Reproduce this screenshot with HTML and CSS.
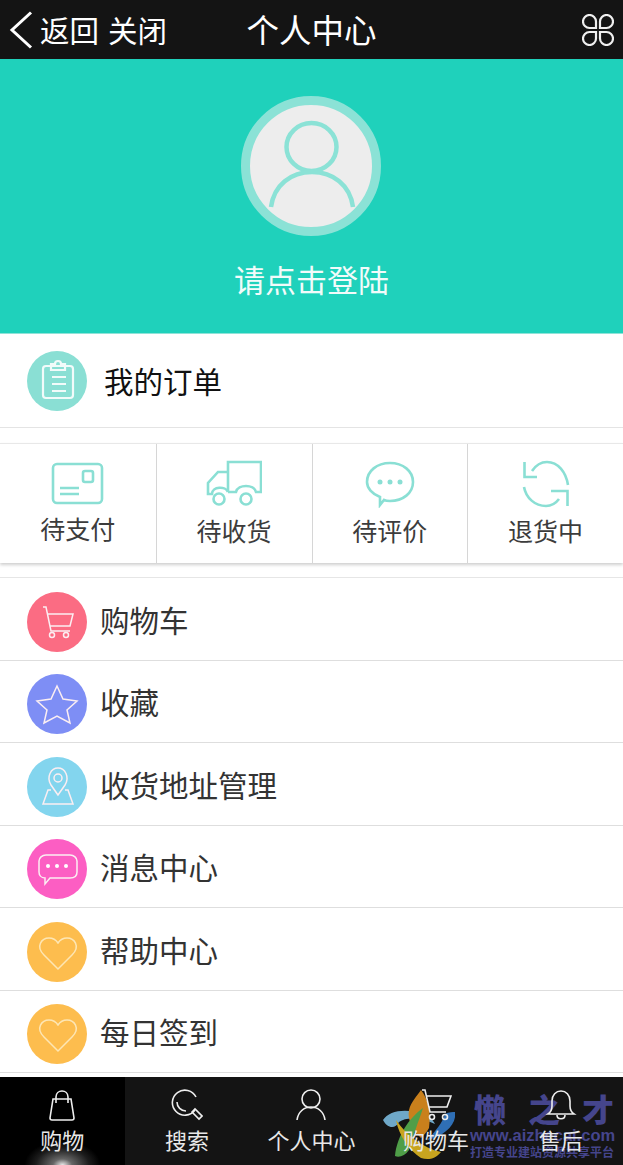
FILE: index.html
```html
<!DOCTYPE html>
<html>
<head>
    <meta charset="utf-8">
    <title>个人中心</title>
    <link rel="stylesheet" href="styles.css">
</head>
<body>
    <div class="topbar">
        <div class="topbar-left">
            <svg class="back-icon" viewBox="0 0 24 38"><path d="M22 1.500 3 19l19 17.500"/></svg>
            <span>返回</span>
            <span class="close-link">关闭</span>
        </div>
        <h1 class="topbar-title">个人中心</h1>
        <svg class="menu-icon" viewBox="0 0 32 32">
            <path d="M14 14H7.500A6.500 6.500 0 1 1 14 7.500z"/>
            <path d="M18 14h6.500A6.500 6.500 0 1 0 18 7.500z"/>
            <path d="M14 18H7.500A6.500 6.500 0 1 0 14 24.500z"/>
            <path d="M18 18h6.500A6.500 6.500 0 1 1 18 24.500z"/>
        </svg>
    </div>

    <div class="profile">
        <div class="avatar">
            <svg viewBox="0 0 122 122">
                <ellipse cx="61.500" cy="42" rx="25" ry="24"/>
                <path d="M21 102c3-22 20-35 41-35s38 13 41 35"/>
            </svg>
        </div>
        <div class="login-link">请点击登陆</div>
    </div>

    <div class="order-row">
        <span class="circle circle-teal">
            <svg viewBox="0 0 60 60">
                <rect x="16" y="15" width="30" height="32" rx="3"/>
                <path d="M24 15v-2h4a3 3 0 0 1 6 0h4v6H24zM25 26h14M25 33h14M25 40h14"/>
            </svg>
        </span>
        <span class="order-text">我的订单</span>
    </div>

    <div class="tabs">
        <div class="tab-item tab-first">
            <svg viewBox="0 0 56 48">
                <rect x="3" y="4" width="49" height="39" rx="4"/>
                <rect x="33" y="11" width="10" height="11" rx="2"/>
                <path d="M10 28h19M10 34h19"/>
            </svg>
            <span>待支付</span>
        </div>
        <div class="tab-item">
            <svg viewBox="0 0 56 48">
                <path d="M22 32V2h33v30h-5c-2-8-18-8-20 0h-8"/>
                <path d="M22 12H12L2 23v11h4c0-8 14-8 16-2"/>
                <circle cx="13" cy="39" r="5.500"/>
                <circle cx="40" cy="39" r="5.500"/>
            </svg>
            <span>待收货</span>
        </div>
        <div class="tab-item">
            <svg viewBox="0 0 56 48">
                <path d="M18 37C10 34 5 28 5 22 5 11 15 3 28 3s23 8 23 19-10 19-23 19c-2 0-4 0-6-1l-4 5z"/>
                <circle class="dot" cx="18" cy="22" r="2.500"/>
                <circle class="dot" cx="28" cy="22" r="2.500"/>
                <circle class="dot" cx="38" cy="22" r="2.500"/>
            </svg>
            <span>待评价</span>
        </div>
        <div class="tab-item">
            <svg viewBox="0 0 56 48">
                <path d="M6.500 2v15H19"/>
                <path d="M14 11C18 5 24 2 29 2c11 0 19 10 21 23"/>
                <path d="M49.500 46V31H33"/>
                <path d="M6 27c2 11 11 19 22 19 5 0 10-3 13-7"/>
            </svg>
            <span>退货中</span>
        </div>
    </div>

    <ul class="menu-list">
        <li class="menu-row">
            <span class="circle circle-pink">
                <svg viewBox="0 0 60 60">
                    <path d="M16 15h3l5 24h19M21 22h25l-3 12H23"/>
                    <circle cx="25" cy="43" r="2.500"/>
                    <circle cx="39" cy="43" r="2.500"/>
                </svg>
            </span>
            <span class="menu-label">购物车</span>
        </li>
        <li class="menu-row">
            <span class="circle circle-blue">
                <svg viewBox="0 0 60 60">
                    <path d="m30 12 6 13 14 2-10 9 3 13-13-7-13 7 3-13-10-9 14-2z"/>
                </svg>
            </span>
            <span class="menu-label">收藏</span>
        </li>
        <li class="menu-row">
            <span class="circle circle-sky">
                <svg viewBox="0 0 60 60">
                    <path d="M31 38 24 28c-5-8 0-17 7-17s12 9 7 17z"/>
                    <circle cx="31" cy="21" r="4"/>
                    <path d="M24 33h-3l-5 14h30l-5-14h-3"/>
                </svg>
            </span>
            <span class="menu-label">收货地址管理</span>
        </li>
        <li class="menu-row">
            <span class="circle circle-magenta">
                <svg viewBox="0 0 60 60">
                    <path d="M19 16h24c4 0 7 3 7 6v11c0 4-3 6-7 6H23l-5 6v-6c-4 0-6-3-6-6V22c0-3 3-6 7-6z"/>
                    <circle class="dot" cx="21" cy="27" r="2"/>
                    <circle class="dot" cx="30" cy="27" r="2"/>
                    <circle class="dot" cx="39" cy="27" r="2"/>
                </svg>
            </span>
            <span class="menu-label">消息中心</span>
        </li>
        <li class="menu-row">
            <span class="circle circle-amber">
                <svg viewBox="0 0 60 60">
                    <path d="M31 47 17 33c-9-9-2-17 5-17 4 0 7 2 9 5 2-3 5-5 9-5 7 0 14 8 5 17z"/>
                </svg>
            </span>
            <span class="menu-label">帮助中心</span>
        </li>
        <li class="menu-row">
            <span class="circle circle-amber">
                <svg viewBox="0 0 60 60">
                    <path d="M31 47 17 33c-9-9-2-17 5-17 4 0 7 2 9 5 2-3 5-5 9-5 7 0 14 8 5 17z"/>
                </svg>
            </span>
            <span class="menu-label">每日签到</span>
        </li>
    </ul>

    <div class="footer">
        <div class="foot-item foot-active">
            <svg viewBox="0 0 32 32">
                <path d="M7 10h18l3 19c0 1-1 2-2 2H6c-1 0-2-1-2-2z"/>
                <path d="M10 14V8c0-8 12-8 12 0v6"/>
            </svg>
            <span>购物</span>
        </div>
        <div class="foot-item">
            <svg viewBox="0 0 32 32">
                <path d="M24 21A12.500 12.500 0 1 1 25 8"/>
                <path d="M6 13c0 5 4 9 9 9M21 23l3-3 7 7-3 3z"/>
            </svg>
            <span>搜索</span>
        </div>
        <div class="foot-item">
            <svg viewBox="0 0 32 32">
                <ellipse cx="16" cy="10" rx="9" ry="9"/>
                <path d="M2 31c1-8 7-13 14-13s13 5 14 13"/>
            </svg>
            <span>个人中心</span>
        </div>
        <div class="foot-item">
            <svg viewBox="0 0 32 32">
                <path d="M2 1h3l5 22h16M7 7h24l-4 11H9"/>
                <circle cx="12" cy="28" r="2.500"/>
                <circle cx="25" cy="28" r="2.500"/>
            </svg>
            <span>购物车</span>
        </div>
        <div class="foot-item">
            <svg viewBox="0 0 32 32">
                <path d="M3 25c3-2 4-4 4-8v-5C7 6 11 2 16 2s9 4 9 10v5c0 4 1 6 4 8z"/>
                <path d="M12 26c0 5 8 5 8 0"/>
            </svg>
            <span>售后</span>
        </div>

        <!-- 水印 -->
        <div class="watermark">
            <svg class="mark-logo" viewBox="0 0 72 70">
                <path class="mark-sky" d="M0 30c6-10 24-12 40-6 6 2 10 6 12 10-12-6-28-8-36-2-4 8-12 6-16-2z"/>
                <path class="mark-orange" d="M38 0c8 10 10 24 8 38-2 4-6 8-8 10-8-8-14-18-12-28 2-8 8-14 12-20z"/>
                <path class="mark-green" d="M12 66c2-20 14-38 28-48-4 12-10 28-14 42-4 6-10 8-14 6z"/>
                <path class="mark-blue" d="M72 22c2 12-10 24-28 28 8-8 16-18 18-26 4-2 8-2 10-2z"/>
                <path class="mark-yellow" d="M13 30c11 16 27 28 45 32-6 8-14 8-20 6-12-8-22-22-25-38z"/>
            </svg>
            <div class="mark-text">
                <div class="mark-name"><span>懒</span><span>之</span><span>才</span></div>
                <div class="mark-url">www.aizhecai.com</div>
                <div class="mark-slogan">打造专业建站资源共享平台</div>
            </div>
        </div>
    </div>
</body>
</html>
```
FILE: styles.css
```css
* {
    box-sizing: border-box;
}

body {
    margin: 0;
    width: 623px;
    height: 1165px;
    overflow: hidden;
    position: relative;
    background: #fff;
    font-family: "Noto Sans CJK SC", "Liberation Sans", sans-serif;
}

/* 顶部导航 */
.topbar {
    height: 59px;
    background: #141414;
    color: #fff;
    display: grid;
    grid-template-columns: 1fr auto 1fr;
    align-items: center;
    padding: 0 9px;
}

.topbar-left {
    display: flex;
    align-items: center;
    font-size: 29.500px;
    line-height: 59px;
}

.back-icon {
    width: 24px;
    height: 38px;
    margin-right: 7px;
    fill: none;
    stroke: #fff;
    stroke-width: 3;
}

.close-link {
    margin-left: 9px;
}

.topbar-title {
    margin: 0;
    padding-bottom: 2px;
    font-size: 32.500px;
    font-weight: 400;
    line-height: 57px;
    white-space: nowrap;
}

.menu-icon {
    justify-self: end;
    width: 32px;
    height: 32px;
    fill: none;
    stroke: #f0f0f0;
    stroke-width: 2.200;
}

/* 头像区域 */
.profile {
    height: 275px;
    background: #1fd1bb;
    border-bottom: 1px solid #8fe3d8;
    display: flex;
    flex-direction: column;
    align-items: center;
    padding-top: 37px;
}

.avatar {
    width: 140px;
    height: 140px;
    margin-right: 1px;
    border-radius: 50%;
    border: 9px solid #8be2d6;
    background: #ededed;
}

.avatar svg {
    display: block;
    width: 122px;
    height: 122px;
    fill: none;
    stroke: #8be2d6;
    stroke-width: 4.500;
}

.login-link {
    margin-top: 19px;
    color: #f2fbfa;
    font-size: 31px;
    line-height: 48px;
}

/* 我的订单 */
.order-row {
    height: 94px;
    display: flex;
    align-items: center;
    padding-left: 27px;
    gap: 17px;
    font-size: 29.500px;
    color: #111;
    border-bottom: 1px solid #e4e4e4;
}

.order-text {
    margin-bottom: 2px;
}

.circle {
    width: 60px;
    height: 60px;
    border-radius: 50%;
    flex: none;
    display: block;
}

.circle svg {
    display: block;
    width: 60px;
    height: 60px;
    fill: none;
    stroke: #fbeef2;
    stroke-width: 1.500;
}

.circle .dot {
    fill: #fff;
    stroke: none;
}

.circle-teal { background: #8adfd4; }
.circle-pink { background: #fb6c83; }
.circle-blue { background: #7e8ef5; }
.circle-sky { background: #83d5ee; }
.circle-magenta { background: #fc5ec3; }
.circle-amber { background: #fdbd4e; }

.circle-teal svg {
    stroke: #f2fbfa;
    stroke-width: 2.200;
}

.circle-amber svg {
    stroke: #fde6b4;
}

/* 订单状态 */
.tabs {
    margin-top: 15px;
    height: 120px;
    display: grid;
    grid-template-columns: repeat(4, 1fr);
    background: #fff;
    border-top: 1px solid #e8e8e8;
    box-shadow: 0 2px 3px #d0d0d0;
}

.tab-item {
    display: flex;
    flex-direction: column;
    align-items: center;
    padding-top: 16px;
    gap: 4px;
    border-left: 1px solid #d6d6d6;
    font-size: 25px;
    line-height: 37px;
    color: #3c3c3c;
}

.tab-first {
    border-left: 0;
    gap: 2px;
}

.tab-item svg {
    display: block;
    width: 56px;
    height: 48px;
    fill: none;
    stroke: #8adfd4;
    stroke-width: 2.600;
}

.tab-item .dot {
    fill: #8adfd4;
    stroke: none;
}

/* 菜单列表 */
.menu-list {
    list-style: none;
    margin: 14px 0 0;
    padding: 0;
    border-top: 1px solid #e6e6e6;
}

.menu-row {
    height: 82.500px;
    display: flex;
    align-items: center;
    padding: 14px 0 8px 27px;
    gap: 13px;
    font-size: 29.500px;
    color: #333;
    border-bottom: 1px solid #dedede;
}

.menu-label {
    margin-bottom: 6px;
}

/* 底部导航 */
.footer {
    position: absolute;
    left: 0;
    right: 0;
    bottom: 0;
    height: 88px;
    background: #141414;
    display: grid;
    grid-template-columns: repeat(5, 1fr);
}

.foot-item {
    position: relative;
    z-index: 1;
    display: flex;
    flex-direction: column;
    align-items: center;
    padding-top: 12px;
    color: #e8e8e8;
    font-size: 22px;
    line-height: 32px;
    gap: 2px;
}

.foot-item svg {
    display: block;
    width: 32px;
    height: 32px;
    fill: none;
    stroke: #eee;
    stroke-width: 1.600;
}

.foot-active {
    background:
        radial-gradient(ellipse 38px 24px at 50% 100%, #e8e8e8 0, #666 25%, #1c1c1c 70%, transparent 100%),
        #000;
}

/* 水印 */
.watermark {
    position: absolute;
    left: 383px;
    top: 13px;
    display: flex;
}

.mark-logo {
    width: 72px;
    height: 70px;
    margin-right: 15px;
    flex: none;
}

.mark-sky { fill: #6fa8c8; }
.mark-orange { fill: #c9801c; }
.mark-green { fill: #4f9e48; }
.mark-blue { fill: #2f6fb5; }
.mark-yellow { fill: #c8a41f; }

.mark-text {
    color: #45458c;
    white-space: nowrap;
}

.mark-name {
    display: flex;
    justify-content: space-between;
    width: 140px;
    margin-left: 4px;
    font-size: 32px;
    font-weight: 900;
    line-height: 36px;
}

.mark-url {
    font-family: "Liberation Sans", sans-serif;
    font-size: 16.500px;
    font-weight: 700;
    line-height: 18px;
}

.mark-slogan {
    font-size: 12px;
    font-weight: 700;
    line-height: 15px;
}
```
